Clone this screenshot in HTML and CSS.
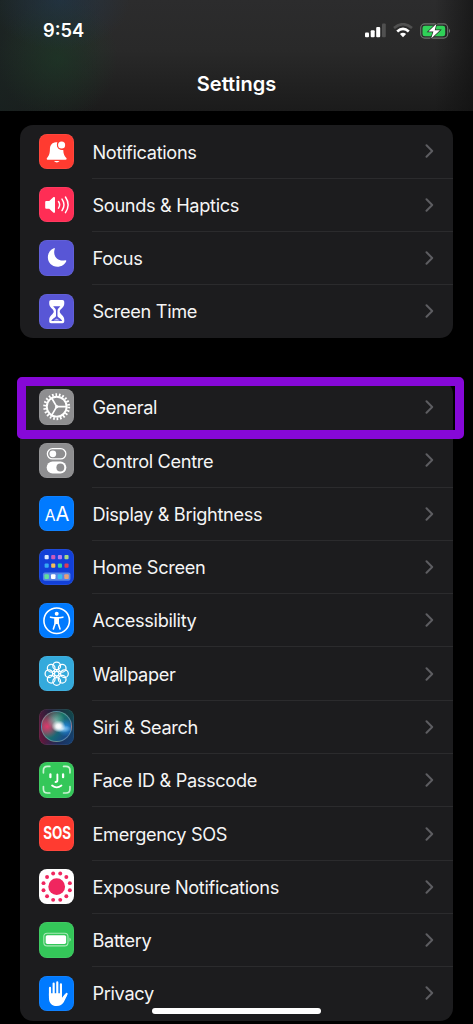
FILE: index.html
```html
<!DOCTYPE html>
<html lang="en">
<head>
<meta charset="utf-8">
<title>Settings</title>
<link rel="stylesheet" href="styles.css">
</head>
<body>
<div class="phone">
  <header class="header">
    <div class="status">
      <span class="time">9:54</span>
      <div class="indicators">
        <svg class="signal" viewBox="0 0 21 15" width="21" height="15"><rect x="0" y="9.6" width="4" height="4.6" rx="1" fill="#fff"/><rect x="5.7" y="7.2" width="4" height="7" rx="1" fill="#fff"/><rect x="11.2" y="4" width="4" height="10.2" rx="1" fill="#fff"/><rect x="17" y="0.6" width="3.8" height="13.6" rx="1" fill="#505050"/></svg>
        <svg class="wifi" viewBox="0 0 20 15" width="20" height="15" fill="none"><path d="M1 5.1Q10-2.700 19 5.100" stroke="#505050" stroke-width="2.600"/><path d="M4.200 8.500Q10 3.300 15.800 8.500" stroke="#fff" stroke-width="2.700"/><path d="M6.900 11.100Q10 8.300 13.100 11.100L10 14.300Z" fill="#fff"/></svg>
        <svg class="charge" viewBox="0 0 31 16" width="31" height="16"><rect x=".7" y=".9" width="27" height="14.2" rx="4" fill="none" stroke="#6d736e" stroke-width="1.1"/><rect x="2.5" y="2.7" width="22.7" height="10.6" rx="2.4" fill="#30d158"/><path d="M29 5.8q2 2 0 4.500z" fill="#777"/><path d="M16.500.7 8.400 8.600h5L11.200 15.400 20 7.200h-5.300Z" fill="#fff" stroke="#242624" stroke-width="1.400" paint-order="stroke"/></svg>
      </div>
    </div>
    <h1 class="title">Settings</h1>
  </header>

  <main class="content">
    <section class="group">
      <div class="row">
        <svg class="icon red" viewBox="0 0 36 36"><path d="M17.2 8.4c-4.2.3-6 3.2-6.1 7.2-.1 5-1 6.600-3 8.900-.7 1 0 1.800 1 1.800h17.800c1.100 0 1.600-1 .9-1.800-2-2.300-3-4.100-3.100-8.300-4.500 1-7.800-3.600-6-7.800Z" fill="#fff"/><circle cx="23" cy="11.200" r="4.600" fill="#ff3b30"/><circle cx="23" cy="11.200" r="3.600" fill="#fff"/><path d="M15.200 27.400h5.800q-2.800 3-5.800 0Z" fill="#fff"/></svg>
        <div class="cell"><span class="label">Notifications</span><svg class="chevron" viewBox="0 0 9 14"><path d="m1.5 1.3 5.7 5.7-5.7 5.7"/></svg></div>
      </div>
      <div class="row">
        <svg class="icon pink" viewBox="0 0 36 36"><path d="M6.3 15.2q0-1 1-1h3.1l4.1-3.8c.8-.7 1.8-.3 1.8.8v14c0 1.1-1 1.5-1.8.8l-4.1-3.9H7.3q-1 0-1-1Z" fill="#fff"/><path d="M19.8 14.8q2.4 3.3 0 6.7M23.4 12.3q4 5.8 0 11.700M26.900 10.200q5.400 7.900 0 15.900" fill="none" stroke="#fff" stroke-width="1.500" stroke-linecap="round"/></svg>
        <div class="cell"><span class="label">Sounds &amp; Haptics</span><svg class="chevron" viewBox="0 0 9 14"><path d="m1.5 1.3 5.7 5.7-5.7 5.7"/></svg></div>
      </div>
      <div class="row">
        <svg class="icon indigo" viewBox="0 0 36 36"><path d="M15.1 8.3c.7-.3 1.2.1.9.9-2.4 7 3.2 13.3 10.7 11.4.8-.2 1.3.2 1 .9-1.5 3.4-5 5.6-9 5.6-5.7 0-9.7-4.1-9.7-9.5 0-4.3 2.3-7.8 6.1-9.3Z" fill="#fff"/></svg>
        <div class="cell"><span class="label">Focus</span><svg class="chevron" viewBox="0 0 9 14"><path d="m1.5 1.3 5.7 5.7-5.7 5.7"/></svg></div>
      </div>
      <div class="row">
        <svg class="icon indigo" viewBox="0 0 36 36"><path d="M12.2 6.2h11.7q1.8 0 1.8 1.8v1.8c0 4-4.6 5.3-4.6 8.1s4.6 4.1 4.6 8.2V28q0 1.8-1.8 1.8H12.2q-1.8 0-1.8-1.8v-1.9c0-4.1 4.6-5.4 4.6-8.2s-4.6-4.1-4.6-8.1V8q0-1.8 1.8-1.8Z" fill="#fff"/><path d="M14.400 12.400h7.300c-.9 1.500-2.900 2.200-2.900 4.800v4.800c.1 1.900 3.500 2.300 4.800 5.400H12.500c1.300-3.100 4.700-3.500 4.800-5.400v-4.800c0-2.600-2-3.300-2.900-4.800Z" fill="#5856d6"/><path d="M15 27c.8-.9 2-1.300 3-2 1 .7 2.200 1.100 3 2Z" fill="#b9b8f0"/></svg>
        <div class="cell"><span class="label">Screen Time</span><svg class="chevron" viewBox="0 0 9 14"><path d="m1.5 1.3 5.7 5.7-5.7 5.7"/></svg></div>
      </div>
    </section>

    <section class="group">
      <div class="highlight"></div>
      <div class="row">
        <svg class="icon gray" viewBox="0 0 36 36" fill="none" stroke="#fff"><circle cx="18" cy="18" r="12.3" stroke-width="2.8" stroke-dasharray="1.7 1.82"/><circle cx="18" cy="18" r="10.1" stroke-width="2"/><path d="M18 18h9.5M18 18l-5-8.6M18 18l-5 8.6" stroke-width="1.7"/><circle cx="18" cy="18" r="1.2" fill="#fff"/></svg>
        <div class="cell"><span class="label">General</span><svg class="chevron" viewBox="0 0 9 14"><path d="m1.5 1.3 5.7 5.7-5.7 5.7"/></svg></div>
      </div>
      <div class="row">
        <svg class="icon gray" viewBox="0 0 36 36"><rect x="8.5" y="5.8" width="18.8" height="10.4" rx="5.2" fill="none" stroke="#fff" stroke-width="1.3"/><circle cx="14.1" cy="11" r="3.4" fill="#fff"/><rect x="7.8" y="18.9" width="20" height="12" rx="6" fill="#fff"/><circle cx="21.7" cy="24.9" r="4" fill="#8e8e90"/></svg>
        <div class="cell"><span class="label">Control Centre</span><svg class="chevron" viewBox="0 0 9 14"><path d="m1.5 1.3 5.7 5.7-5.7 5.7"/></svg></div>
      </div>
      <div class="row">
        <svg class="icon blue" viewBox="0 0 36 36"><text class="aa" x="5.900" y="25.400" font-size="16">A</text><text class="aa" x="16.700" y="25.400" font-size="20.400">A</text></svg>
        <div class="cell"><span class="label">Display &amp; Brightness</span><svg class="chevron" viewBox="0 0 9 14"><path d="m1.5 1.3 5.7 5.7-5.7 5.7"/></svg></div>
      </div>
      <div class="row">
        <svg class="icon home" viewBox="0 0 36 36"><rect x="4" y="24" width="28" height="8.2" rx="2" fill="#5685e8"/><g><rect x="5.7" y="6.2" width="4.2" height="4.2" rx="1" fill="#dbe8ff"/><rect x="12.4" y="6.2" width="4.2" height="4.2" rx="1" fill="#ca5bbb"/><rect x="19.2" y="6.2" width="4.2" height="4.2" rx="1" fill="#b47af2"/><rect x="25.9" y="6.2" width="4.2" height="4.2" rx="1" fill="#a6d987"/><rect x="5.7" y="14.8" width="4.2" height="4.2" rx="1" fill="#36aaf5"/><rect x="12.4" y="14.8" width="4.2" height="4.2" rx="1" fill="#f4bd58"/><rect x="19.2" y="14.8" width="4.2" height="4.2" rx="1" fill="#2bd6a2"/><rect x="25.9" y="14.8" width="4.2" height="4.2" rx="1" fill="#dd3b54"/><rect x="5.5" y="25.8" width="4.6" height="4.6" rx="1" fill="#65df9b"/><rect x="12.2" y="25.8" width="4.6" height="4.6" rx="1" fill="#fff"/><rect x="19" y="25.8" width="4.6" height="4.6" rx="1" fill="#3abde9"/><rect x="25.7" y="25.8" width="4.6" height="4.6" rx="1" fill="#e8a078"/></g></svg>
        <div class="cell"><span class="label">Home Screen</span><svg class="chevron" viewBox="0 0 9 14"><path d="m1.5 1.3 5.7 5.7-5.7 5.7"/></svg></div>
      </div>
      <div class="row">
        <svg class="icon blue" viewBox="0 0 36 36"><circle cx="18" cy="18" r="13" fill="none" stroke="#fff" stroke-width="1.6"/><circle cx="18" cy="11" r="2" fill="#fff"/><path d="M11.7 14.4q6.3 1.3 12.6 0M16.5 15.5v5.2l-1.9 5.8M19.5 15.5v5.2l1.9 5.8" fill="none" stroke="#fff" stroke-width="1.6" stroke-linecap="round"/><path d="M15.7 14.8h4.6v6.5h-4.6Z" fill="#fff"/></svg>
        <div class="cell"><span class="label">Accessibility</span><svg class="chevron" viewBox="0 0 9 14"><path d="m1.5 1.3 5.7 5.7-5.7 5.7"/></svg></div>
      </div>
      <div class="row">
        <svg class="icon cyan" viewBox="0 0 36 36" fill="none" stroke="#fff" stroke-width="1.3"><circle cx="18" cy="10.1" r="3.9"/><circle cx="23.6" cy="12.4" r="3.9"/><circle cx="25.9" cy="18" r="3.9"/><circle cx="23.6" cy="23.6" r="3.9"/><circle cx="18" cy="25.9" r="3.9"/><circle cx="12.4" cy="23.6" r="3.9"/><circle cx="10.1" cy="18" r="3.9"/><circle cx="12.4" cy="12.4" r="3.9"/><circle cx="18" cy="18" r="2.3"/><path d="M18 15.7v-2M18 20.3v2M15.7 18h-2M20.3 18h2M16.2 16.2l-1.6-1.6M19.8 16.2l1.6-1.6M16.2 19.8l-1.6 1.6M19.8 19.8l1.6 1.6"/></svg>
        <div class="cell"><span class="label">Wallpaper</span><svg class="chevron" viewBox="0 0 9 14"><path d="m1.5 1.3 5.7 5.7-5.7 5.7"/></svg></div>
      </div>
      <div class="row">
        <div class="icon siri"><div class="orb"></div></div>
        <div class="cell"><span class="label">Siri &amp; Search</span><svg class="chevron" viewBox="0 0 9 14"><path d="m1.5 1.3 5.7 5.7-5.7 5.7"/></svg></div>
      </div>
      <div class="row">
        <svg class="icon green" viewBox="0 0 36 36" fill="none" stroke="#fff" stroke-linecap="round"><g stroke="#c9f3d3" stroke-width="1.7"><path d="M4.5 11V8.6q0-4.1 4.1-4.1H11M25 4.5h2.4q4.1 0 4.1 4.1V11M31.5 25v2.4q0 4.1-4.1 4.1H25M11 31.5H8.6q-4.1 0-4.1-4.1V25"/></g><path d="M11.6 12.5v3M24.5 12.5v3" stroke-width="2.3"/><path d="M18.7 12.6v6q0 1.7-1.9 1.7" stroke-width="1.9"/><path d="M13.3 24q4.7 3.6 9.5 0" stroke-width="1.9"/></svg>
        <div class="cell"><span class="label">Face ID &amp; Passcode</span><svg class="chevron" viewBox="0 0 9 14"><path d="m1.5 1.3 5.7 5.7-5.7 5.7"/></svg></div>
      </div>
      <div class="row">
        <div class="icon red sos"><span>SOS</span></div>
        <div class="cell"><span class="label">Emergency SOS</span><svg class="chevron" viewBox="0 0 9 14"><path d="m1.5 1.3 5.7 5.7-5.7 5.7"/></svg></div>
      </div>
      <div class="row">
        <svg class="icon white" viewBox="0 0 36 36" fill="#f0265f"><circle cx="18" cy="18" r="8.5"/><circle cx="31.4" cy="21.6" r="2"/><circle cx="27.8" cy="27.8" r="2"/><circle cx="21.6" cy="31.4" r="2"/><circle cx="14.4" cy="31.4" r="2"/><circle cx="8.2" cy="27.8" r="2"/><circle cx="4.6" cy="21.6" r="2"/><circle cx="4.6" cy="14.4" r="2"/><circle cx="8.2" cy="8.2" r="2"/><circle cx="14.4" cy="4.6" r="2"/><circle cx="21.6" cy="4.6" r="2"/><circle cx="27.8" cy="8.2" r="2"/><circle cx="31.4" cy="14.4" r="2"/></svg>
        <div class="cell"><span class="label">Exposure Notifications</span><svg class="chevron" viewBox="0 0 9 14"><path d="m1.5 1.3 5.7 5.7-5.7 5.7"/></svg></div>
      </div>
      <div class="row">
        <svg class="icon green" viewBox="0 0 36 36"><rect x="4.9" y="11.5" width="24.6" height="12.8" rx="3.4" fill="none" stroke="#a9e9b8" stroke-width="1.1"/><rect x="6.8" y="13.4" width="20.8" height="9" rx="1.7" fill="#fff"/><path d="M31 15.7q2.6 2.2 0 4.5Z" fill="#a9e9b8"/></svg>
        <div class="cell"><span class="label">Battery</span><svg class="chevron" viewBox="0 0 9 14"><path d="m1.5 1.3 5.7 5.7-5.7 5.7"/></svg></div>
      </div>
      <div class="row">
        <svg class="icon blue" viewBox="0 0 36 36"><path d="M11.2 12v8M14.9 7.7V20M18.6 6.5V20M22.3 8.6V20M28.1 18.2l-4 6" stroke="#fff" stroke-width="2.2" stroke-linecap="round"/><path d="M10.1 17.5h13.3v4.7l2.6-3.3 2.7.3c-2.3 4.3-3.6 11.3-10.6 11.3-5.4 0-8-3.5-8-8.5Z" fill="#fff"/></svg>
        <div class="cell"><span class="label">Privacy</span><svg class="chevron" viewBox="0 0 9 14"><path d="m1.5 1.3 5.7 5.7-5.7 5.7"/></svg></div>
      </div>
    </section>
  </main>
  <div class="home-indicator"></div>
</div>
</body>
</html>
```
FILE: styles.css
```css
* { box-sizing: border-box; }
body { margin: 0; background: #000; color: #fff; font-family: Inter, "Liberation Sans", sans-serif; }
.phone { position: relative; width: 473px; height: 1024px; overflow: hidden; background: #000; }
.header {
  height: 111px;
  background:
    linear-gradient(to left, rgba(16,16,16,.65), transparent 38px),
    radial-gradient(ellipse 70px 50px at 60px 0, rgba(32,56,78,.6), transparent),
    radial-gradient(ellipse 60px 62px at 58px 58px, rgba(28,57,38,.65), transparent),
    linear-gradient(to right, rgba(24,34,32,.8), transparent 100px),
    linear-gradient(#2c2c2d, #292929 45%, #1b1b1b);
}
.status { display: flex; justify-content: space-between; align-items: center; height: 60px; padding: 0 22px 0 43px; }
.time { font-size: 18.3px; font-weight: 600; }
.indicators { display: flex; align-items: center; padding-top: 1px; }
.wifi { margin-left: 7px; }
.charge { margin-left: 7px; }
.title { margin: 0; padding-top: 11px; text-align: center; font-size: 20px; line-height: 26px; font-weight: 600; }
.content { display: flex; flex-direction: column; gap: 42.5px; padding: 14.3px 20px 0; }
.group { position: relative; background: #1c1c1e; border-radius: 13px; }
.row { display: flex; align-items: center; height: 53.3px; padding-left: 19px; }
.icon { flex: none; display: block; width: 35.4px; height: 35.4px; margin-right: 18.1px; margin-bottom: 1.2px; border-radius: 8px; box-shadow: inset 0 0 0 .5px rgba(255,255,255,.12); }
.cell { flex: 1; height: 100%; display: flex; align-items: center; justify-content: space-between; padding-right: 19.5px; border-bottom: 1px solid #2b2b2d; }
.row:last-child .cell { border-bottom-color: transparent; }
.label { font-size: 18.2px; line-height: 24px; letter-spacing: -.34px; color: #f5f5f5; white-space: nowrap; padding-top: .2px; }
.chevron { width: 9px; height: 14px; fill: none; stroke: #5d5d61; stroke-width: 2; stroke-linecap: round; stroke-linejoin: round; }
.red { background: #ff3b30; }
.pink { background: #ff2d55; }
.indigo { background: #5856d6; }
.gray { background: #8e8e90; }
.blue { background: #007aff; }
.home { background: #1240d8; }
.cyan { background: #34aadc; }
.green { background: #34c759; }
.white { background: #fff; }
.aa { fill: #fff; font-family: Inter, sans-serif; font-weight: 400; }
.sos { display: flex; align-items: center; justify-content: center; }
.sos span { font-size: 17.4px; line-height: 24px; font-weight: 700; transform: scaleX(.77); }
.siri { display: flex; align-items: center; justify-content: center; background: linear-gradient(135deg, transparent 50%, rgba(20,65,135,.8)), linear-gradient(75deg, #6d153c, #24203b 45%, #104b4a); }
.orb {
  flex: none; width: 31px; height: 31px; border-radius: 50%; border: 1px solid rgba(145,185,190,.5);
  background:
    radial-gradient(ellipse 7px 6px at 57% 49%, #fff, rgba(255,255,255,.9) 35%, transparent),
    radial-gradient(ellipse 9px 4px at 70% 58%, rgba(190,230,255,.8), transparent),
    radial-gradient(circle 9px at 48% 30%, rgba(170,220,210,.6), transparent),
    radial-gradient(circle 9px at 82% 54%, #238de0, transparent),
    radial-gradient(circle 12px at 18% 50%, #df396d, transparent),
    linear-gradient(125deg, #7f2d49, #197768 45%, #183999);
}
.highlight { position: absolute; left: -3px; top: -4px; width: 447px; height: 62px; border: 9px solid #8608d8; border-radius: 5px; }
.home-indicator { position: absolute; left: 152px; top: 1008px; width: 169px; height: 6px; border-radius: 3px; background: #fff; }
```
